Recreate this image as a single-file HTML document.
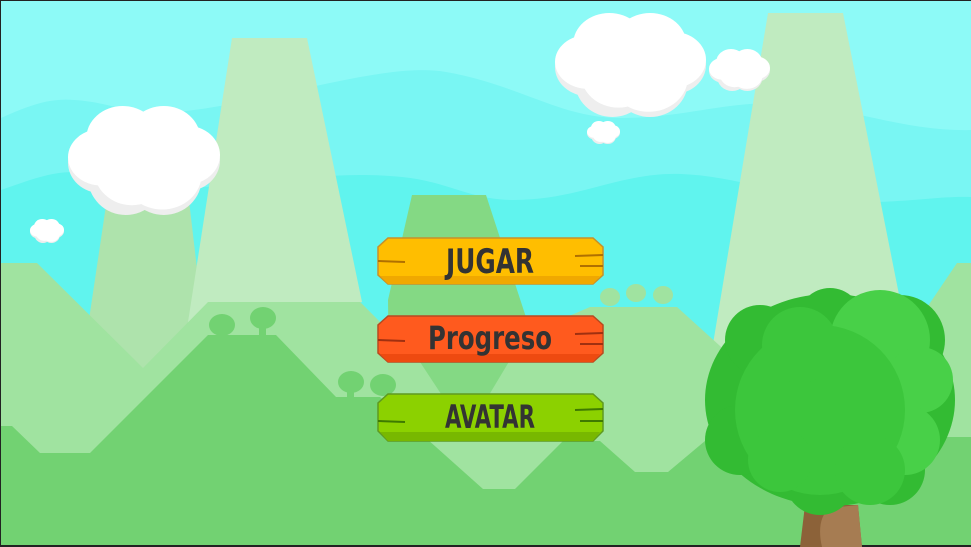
<!DOCTYPE html>
<html><head><meta charset="utf-8"><style>
html,body{margin:0;padding:0;width:971px;height:547px;overflow:hidden;background:#222}
svg{display:block}
</style></head><body>
<svg width="971" height="547" viewBox="0 0 971 547" xmlns="http://www.w3.org/2000/svg">
<defs>
<g id="cloud">
 <g fill="#EEEEEE">
  <ellipse cx="22" cy="52" rx="22" ry="28"/>
  <ellipse cx="78" cy="50" rx="22" ry="28"/>
  <ellipse cx="38" cy="65" rx="25" ry="35"/>
  <ellipse cx="63" cy="66" rx="25" ry="34"/>
 </g>
 <g fill="#FFFFFF">
  <ellipse cx="22" cy="47" rx="22" ry="26"/>
  <ellipse cx="78" cy="45" rx="22" ry="27"/>
  <ellipse cx="36" cy="30" rx="24" ry="30"/>
  <ellipse cx="63" cy="30" rx="24" ry="30"/>
  <ellipse cx="42" cy="58" rx="25" ry="33"/>
  <ellipse cx="62" cy="62" rx="26" ry="33"/>
 </g>
</g>
</defs>
<rect x="1" y="1" width="970" height="544" fill="#8DFAF7"/>
<path d="M1 118 C30 105 50 98 74 100 C110 102 130 115 160 113 C250 110 380 60 446 72 C520 85 560 118 620 118 C680 118 720 103 774 103 C840 103 900 132 971 130 L971 545 L1 545Z" fill="#79F6F3"/>
<path d="M1 190 C30 180 50 172 74 172 C120 172 160 190 204 187 C280 183 330 170 402 177 C450 182 470 200 514 200 C580 200 620 172 681 174 C740 176 800 202 867 202 C910 202 940 196 971 197 L971 545 L1 545Z" fill="#60F4EE"/>
<!-- back mountains -->
<polygon points="108,192 188,192 210,380 80,380" fill="#AEE3AC"/>
<polygon points="232,38 307,38 362,302 186,335" fill="#C0EBC0"/>
<polygon points="768,13 843,13 910,350 712,350" fill="#C0EBC0"/>
<polygon points="412,195 486,195 540,360 540,470 390,470 388,300" fill="#84D984"/>
<!-- light hills layer -->
<path d="M1 263 L37 263 L143 368 L208 302 L360 302 L420 362 L470 470 L400 545 L1 545Z" fill="#A0E3A0"/>
<path d="M360 302 L420 362 L445 400 L480 410 L525 335 L590 307 L677 307 L730 355 L905 340 L957 263 L971 263 L971 545 L360 545Z" fill="#A0E3A0"/>
<g fill="#A0E3A0">
 <ellipse cx="610" cy="297" rx="10" ry="9"/><ellipse cx="636" cy="293" rx="10" ry="9"/><ellipse cx="663" cy="295" rx="10" ry="9"/>
</g>
<!-- dark front layer -->
<path d="M1 426 L12 426 L40 453 L90 453 L208 335 L276 335 L336 397 L380 397 L483 489 L515 489 L563 441 L600 441 L635 472 L668 472 L730 420 L905 437 L971 437 L971 545 L1 545Z" fill="#72D272"/>
<g fill="#72D272">
 <ellipse cx="222" cy="325" rx="13" ry="11"/><rect x="217" y="330" width="10" height="8"/>
 <ellipse cx="263" cy="318" rx="13" ry="11"/><rect x="259" y="325" width="7" height="12"/>
 <ellipse cx="351" cy="382" rx="13" ry="11"/><rect x="347" y="388" width="7" height="10"/>
 <ellipse cx="383" cy="385" rx="13" ry="11"/>
</g>
<!-- clouds -->
<use href="#cloud" transform="translate(68,106) scale(1.52,1.09)"/>
<use href="#cloud" transform="translate(30,219) scale(0.34,0.24)"/>
<use href="#cloud" transform="translate(555,13) scale(1.51,1.04)"/>
<use href="#cloud" transform="translate(709,49) scale(0.61,0.42)"/>
<use href="#cloud" transform="translate(587,121) scale(0.33,0.23)"/>
<!-- tree -->
<path d="M800 547 L805 505 L858 505 L862 547Z" fill="#8C6239"/>
<path d="M822 547 C818 530 820 515 830 508 L858 505 L862 547Z" fill="#A67C52"/>
<g fill="#33BB33">
 <ellipse cx="830" cy="400" rx="125" ry="106"/>
 <circle cx="760" cy="340" r="35"/><circle cx="900" cy="340" r="45"/><circle cx="830" cy="320" r="32"/>
 <circle cx="740" cy="440" r="35"/><circle cx="820" cy="480" r="35"/><circle cx="890" cy="470" r="35"/>
</g>
<g fill="#48D048">
 <circle cx="880" cy="340" r="50"/><circle cx="920" cy="380" r="33"/><circle cx="905" cy="440" r="35"/>
</g>
<g fill="#3CC63C">
 <ellipse cx="820" cy="410" rx="85" ry="85"/><circle cx="800" cy="345" r="38"/><circle cx="870" cy="470" r="35"/><circle cx="780" cy="460" r="32"/>
</g>
<!-- buttons -->
<g font-family="'DejaVu Sans Condensed','Liberation Sans Narrow','Liberation Sans',sans-serif" font-weight="bold" fill="#333">
 <polygon points="388,238 593,238 603,247 603,275 593,284 388,284 378,275 378,247" fill="#FFBE00" stroke="#C7902A" stroke-width="1.5"/>
 <path d="M380 276 L600 276 L593 284 L388 284Z" fill="#F0A800"/>
 <path d="M378 261 L405 262 M575 256 L603 255 M580 266 L603 266" stroke="#B07000" stroke-width="2"/>
 <text x="490" y="273" text-anchor="middle" font-size="34" textLength="88" lengthAdjust="spacingAndGlyphs">JUGAR</text>

 <polygon points="388,316 593,316 603,325 603,353 593,362 388,362 378,353 378,325" fill="#FF5A1E" stroke="#B84A20" stroke-width="1.5"/>
 <path d="M380 354 L600 354 L593 362 L388 362Z" fill="#EE4A10"/>
 <path d="M378 340 L405 341 M575 334 L603 333 M580 344 L603 344" stroke="#A03010" stroke-width="2"/>
 <text x="490" y="349" text-anchor="middle" font-size="32" textLength="124" lengthAdjust="spacingAndGlyphs">Progreso</text>

 <polygon points="388,394 593,394 603,403 603,431 593,441 388,441 378,431 378,403" fill="#8CD100" stroke="#5E9A20" stroke-width="1.5"/>
 <path d="M380 432 L600 432 L593 441 L388 441Z" fill="#78B800"/>
 <path d="M378 421 L405 422 M575 410 L603 409 M580 421 L603 421" stroke="#3E7A00" stroke-width="2"/>
 <text x="490" y="428" text-anchor="middle" font-size="32" textLength="90" lengthAdjust="spacingAndGlyphs">AVATAR</text>
</g>
</svg>
</body></html>
